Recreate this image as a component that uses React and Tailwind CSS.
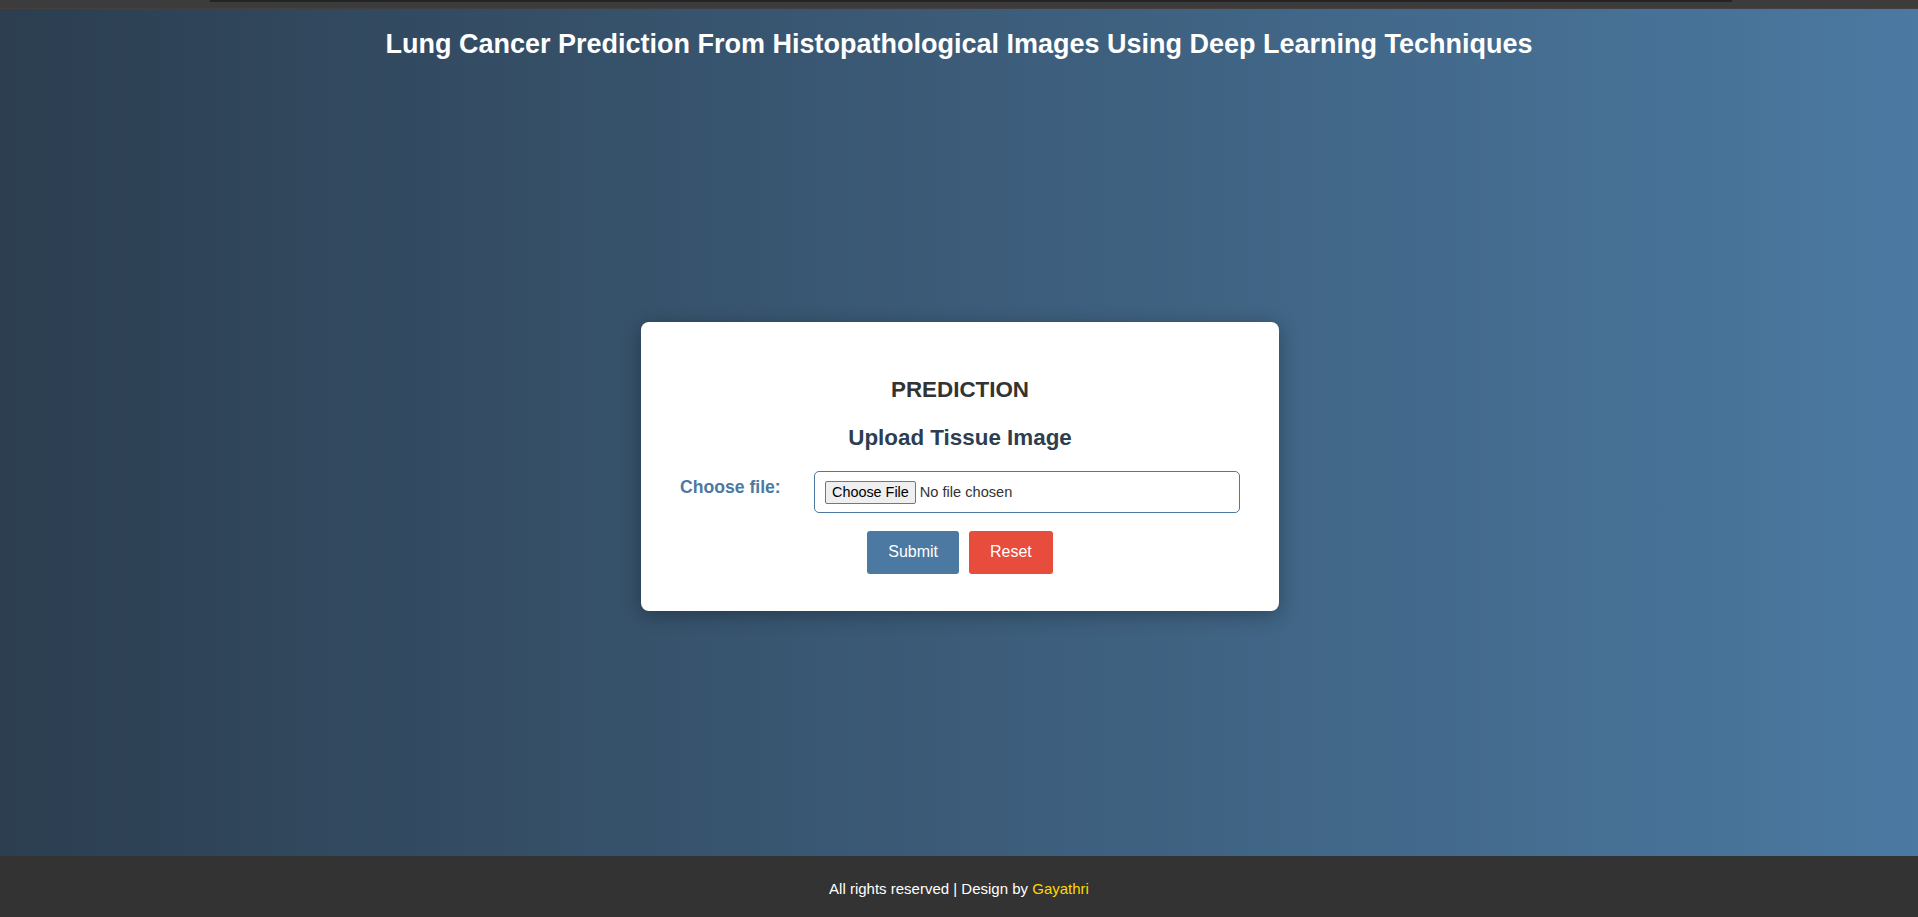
export default function App() {
  return (
    <div className="flex h-[917px] w-full flex-col font-['Liberation_Sans',Arial,sans-serif]">
      <div className="h-[9px] shrink-0 border-b border-[#453f3f] bg-[#3c3c3c] pl-[210px]">
        <div className="h-[2px] w-[1522px] bg-[#242424]" />
      </div>

      <main className="flex flex-1 flex-col bg-[linear-gradient(to_right,#2c3e50,#4b79a1)]">
        <header className="px-5 pt-[20px] pb-[16px] text-center">
          <h1 className="text-[27px] font-bold leading-[31px] text-white">
            Lung Cancer Prediction From Histopathological Images Using Deep Learning Techniques
          </h1>
        </header>

        <div className="flex flex-1 items-center justify-center">
          <div className="ml-[2px] w-[638px] rounded-lg bg-white px-[39px] pt-[55px] pb-[37px] shadow-[0_4px_20px_rgba(0,0,0,0.3)]">
            <h2 className="text-center text-[22.4px] font-bold leading-[26px] text-[#333]">PREDICTION</h2>
            <h3 className="mt-[22px] text-center text-[22.4px] font-bold leading-[26px] text-[#2c3e50]">
              Upload Tissue Image
            </h3>

            <form className="mt-5">
              <div className="flex items-start">
                <label className="w-[134px] shrink-0 pt-[6px] text-[17.6px] font-bold leading-5 text-[#4b79a1]">
                  Choose file:
                </label>
                <input
                  type="file"
                  className="flex-1 rounded-[5px] border border-[#4b79a1] px-[10px] py-[8px] text-[14.6px] leading-[24px] text-[#333] file:mr-[4px] file:rounded-[2px] file:border file:border-[#767676] file:bg-[#efefef] file:px-[6px] file:py-[1px] file:text-[14.4px] file:leading-[19px] file:text-black"
                />
              </div>

              <div className="mt-[18px] flex justify-center gap-[10px]">
                <button type="submit" className="h-[43px] rounded-[3px] bg-[#4b79a1] px-[21px] text-[16px] text-white">
                  Submit
                </button>
                <button type="reset" className="h-[43px] rounded-[3px] bg-[#e74c3c] px-[21px] text-[16px] text-white">
                  Reset
                </button>
              </div>
            </form>
          </div>
        </div>
      </main>

      <footer className="flex h-[61px] shrink-0 items-center justify-center bg-[#333] pt-[6px] text-[15px] text-white">
        <p>
          All rights reserved | Design by <span className="text-[#ffd700]">Gayathri</span>
        </p>
      </footer>
    </div>
  );
}
